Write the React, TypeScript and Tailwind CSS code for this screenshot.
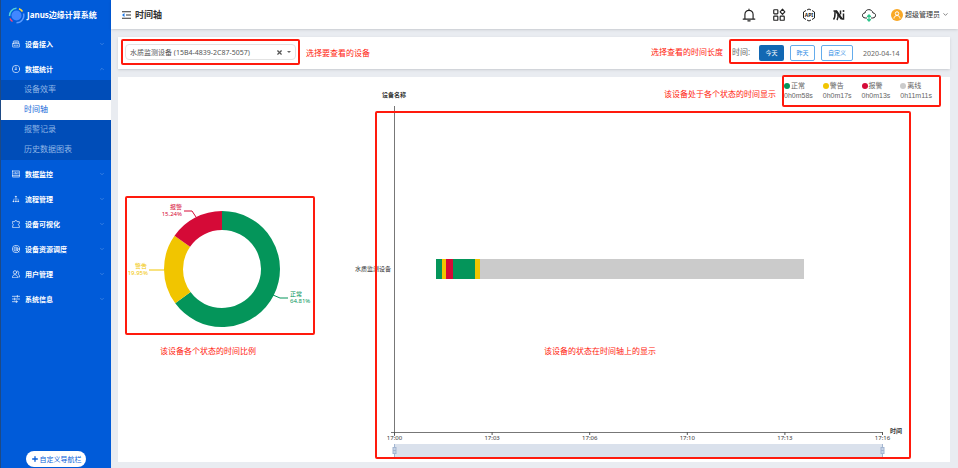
import type { ReactNode } from 'react';
import { ChevronDown, ChevronUp, Plus, X } from 'lucide-react';

const GREEN = '#04955a';
const YELLOW = '#f1c500';
const RED = '#d50a37';
const GRAY = '#cbcbcb';

const chartFont = '"Noto Sans", "Noto Sans CJK SC", sans-serif';

function Icon({ size = 'size-2', children }: { size?: string; children: ReactNode }) {
  return (
    <svg
      viewBox="0 0 24 24"
      className={`${size} shrink-0`}
      fill="none"
      stroke="currentColor"
      strokeWidth="2"
      strokeLinecap="round"
      strokeLinejoin="round"
      aria-hidden="true"
    >
      {children}
    </svg>
  );
}

const topMenus = [
  {
    name: '设备接入',
    open: false,
    icon: (
      <>
        <path d="M4 10V5a2 2 0 0 1 2-2h12a2 2 0 0 1 2 2v5" />
        <rect x="1" y="11" width="22" height="10" rx="2" />
        <path d="M8 7h8M6 16h4M14 16h4" />
      </>
    ),
  },
  {
    name: '数据统计',
    open: true,
    icon: (
      <>
        <circle cx="12" cy="12" r="11" />
        <path d="M12 6v7M9 13h4" />
      </>
    ),
  },
];

const subMenus = [
  { name: '设备效率', active: false },
  { name: '时间轴', active: true },
  { name: '报警记录', active: false },
  { name: '历史数据图表', active: false },
];

const bottomMenus = [
  {
    name: '数据监控',
    open: false,
    icon: (
      <>
        <rect x="1" y="3" width="22" height="18" rx="1" />
        <path d="M1 17h22M6 12V9M10 12V7M14 12V9M18 12V7" />
      </>
    ),
  },
  {
    name: '流程管理',
    open: false,
    icon: (
      <>
        <path d="M12 7v5M5 17v-5h14v5M12 12v5" strokeWidth="1" />
        <path d="M11 4h2v2h-2zM4 18h2v2H4zM11 18h2v2h-2zM18 18h2v2h-2z" fill="currentColor" />
      </>
    ),
  },
  {
    name: '设备可视化',
    open: false,
    icon: <path d="M2 5h6c0-5 7-5 7 0h7v6c-4 0-4 6 0 6v6H2v-6c3 0 3-5 0-6z" />,
  },
  {
    name: '设备资源调度',
    open: false,
    icon: (
      <>
        <circle cx="12" cy="12" r="11" />
        <circle cx="12" cy="12" r="6" />
        <circle cx="12" cy="12" r="1" />
        <path d="M16 16l5 5" />
      </>
    ),
  },
  {
    name: '用户管理',
    open: false,
    icon: (
      <>
        <circle cx="9" cy="7" r="5" />
        <path d="M1 22c0-11 16-11 16 0zM16 3c5 0 6 6 2 9 3 1 5 5 5 9h-3" />
      </>
    ),
  },
  {
    name: '系统信息',
    open: false,
    icon: <path d="M1 4h22M16 1v6M1 12h22M8 9v6M1 20h16M13 17v6" />,
  },
];

type Menu = { name: string; open: boolean; icon: ReactNode };

function MenuItem({ item }: { item: Menu }) {
  return (
    <button
      className={`flex h-6 w-full items-center pl-[11px] pr-1.5 text-[7px] font-bold text-white ${item.open ? 'pt-0.5' : ''}`}
    >
      <Icon>{item.icon}</Icon>
      <span className="ml-[5px] flex-1 text-left">{item.name}</span>
      {item.open ? (
        <ChevronUp size={6} className="text-white/40" />
      ) : (
        <ChevronDown size={6} className="text-white/40" />
      )}
    </button>
  );
}

function Logo() {
  return (
    <svg viewBox="0 0 34 34" className="size-[17px] shrink-0" fill="none" aria-hidden="true">
      <circle cx="17" cy="17" r="10" fill="#4187ff" />
      <g strokeWidth="3">
        <path d="M3 18A14.500 14.500 0 0 1 17 2.500" stroke="#4fd0dc" />
        <path d="M22 3.500A14.500 14.500 0 0 1 29 9" stroke="#ffd93b" />
        <path d="M31 13A14.500 14.500 0 0 1 17 31.500" stroke="#5a9bff" />
        <path d="M9 29A14.500 14.500 0 0 1 4 23" stroke="#ff4570" />
      </g>
    </svg>
  );
}

function Sidebar() {
  return (
    <aside className="flex w-[111px] shrink-0 flex-col border-l border-[#1e4a85] bg-[#005bd9]">
      <div className="flex h-8 items-center gap-0.5 pb-0.5 pl-[7px] text-[8px] font-bold text-white">
        <Logo />
        <span className="whitespace-nowrap">Janus边缘计算系统</span>
      </div>
      <nav>
        {topMenus.map((item) => (
          <MenuItem key={item.name} item={item} />
        ))}
        <div className="bg-[#004db8]">
          {subMenus.map((item) => (
            <a
              key={item.name}
              href="#"
              className={`flex h-5 items-center pb-0.5 pl-[23px] text-[8px] ${
                item.active ? 'bg-white text-[#1467d8]' : 'text-[#8fb5e6]'
              }`}
            >
              {item.name}
            </a>
          ))}
        </div>
        <div className="flex flex-col gap-px pt-0.5">
          {bottomMenus.map((item) => (
            <MenuItem key={item.name} item={item} />
          ))}
        </div>
      </nav>
      <button className="mx-auto mt-auto mb-px flex h-4 w-[60px] items-center justify-center gap-px rounded-full bg-white text-[7px] whitespace-nowrap text-[#0a5fd8]">
        <Plus size={8} strokeWidth={4} />
        自定义导航栏
      </button>
    </aside>
  );
}

function Header() {
  return (
    <header className="flex h-[29px] items-center bg-white pl-[11px] pr-[9px] text-[#222] shadow-sm">
      <svg viewBox="0 0 18 16" className="h-2 w-[9px]" fill="none" aria-hidden="true">
        <path d="M0 1.500h18M8 8h10M0 14.500h18" stroke="#333" strokeWidth="2" />
        <path d="M0 8l5-4v8z" fill="#1976e8" />
      </svg>
      <h1 className="ml-1 text-[9px] font-bold text-[#333]">时间轴</h1>
      <div className="ml-auto flex items-center gap-4">
        <button aria-label="通知">
          <Icon size="size-3.5">
            <path d="M2 19h20M5 19v-8a7 7 0 0 1 14 0v8M10 22h4M12 4V2" />
          </Icon>
        </button>
        <button aria-label="应用">
          <Icon size="size-3.5">
            <rect x="3" y="3" width="7" height="7" rx="1" />
            <path d="M18 2l4 4.500-4 4.500-4-4.500z" />
            <rect x="3" y="14" width="7" height="7" rx="1" />
            <rect x="14" y="14" width="7" height="7" rx="1" />
          </Icon>
        </button>
        <button aria-label="API">
          <svg viewBox="0 0 28 28" className="size-3.5" fill="none" stroke="currentColor" strokeWidth="2" aria-hidden="true">
            <path d="M8 5L3 8v12l5 3M20 23l5-3V8l-5-3M10 4l4-2 4 2M10 24l4 2 4-2" />
            <text x="14" y="18" textAnchor="middle" fontSize="10" fontWeight="700" fill="currentColor" stroke="none" fontFamily={chartFont}>
              API
            </text>
          </svg>
        </button>
        <button aria-label="节点">
          <svg viewBox="0 0 28 28" className="size-3.5" fill="none" stroke="currentColor" strokeWidth="3" aria-hidden="true">
            <path d="M3 6h6l11 16h3V11M6 7v4c0 5 0 9-3 12M12 13c1 5 0 8-2 11M17 5v8" />
            <path d="M8 6l11 16" strokeWidth="4" />
            <circle cx="23" cy="6" r="2" fill="currentColor" stroke="none" />
          </svg>
        </button>
        <button aria-label="云端上传">
          <svg viewBox="0 0 28 28" className="size-3.5" fill="none" strokeWidth="2" strokeLinecap="round" aria-hidden="true">
            <path d="M9 20H7C-1 20-1 10 6 10 7 1 20 1 22 10c7 0 7 10-1 10h-2" stroke="#222" />
            <path d="M14 25V15M11 17l3-3 3 3M11 23l3 3 3-3" stroke="#2bc48a" strokeWidth="2.500" />
          </svg>
        </button>
      </div>
      <button className="ml-[15px] flex items-center text-[7px] text-[#333]">
        <svg viewBox="0 0 24 24" className="size-3" fill="none" stroke="#fff" strokeWidth="2" aria-hidden="true">
          <circle cx="12" cy="12" r="12" fill="#f9a825" stroke="none" />
          <circle cx="12" cy="9" r="3.500" />
          <path d="M6 19c0-8 12-8 12 0" />
        </svg>
        <span className="ml-0.5">超级管理员</span>
        <ChevronDown size={7} className="ml-0.5" />
      </button>
    </header>
  );
}

function FilterBar() {
  return (
    <section className="flex h-8 items-start bg-white pl-[3px] pr-[41px] pt-0.5 shadow-sm">
      <div className="flex h-[26px] w-[179px] items-center rounded-xs border-2 border-[#ff1a0d] px-0.5">
        <div className="flex h-4 w-full items-center rounded-sm border border-[#e3e3e3] pr-1 text-[#555]">
          <select aria-label="设备" className="min-w-0 flex-1 appearance-none bg-transparent pl-1 text-[7px] outline-none">
            <option>水质监测设备 (15B4-4839-2C87-5057)</option>
          </select>
          <button aria-label="清除">
            <X size={7} strokeWidth={4} />
          </button>
          <span className="ml-1 border-x-2 border-t-2 border-x-transparent border-t-[#666]" />
        </div>
      </div>
      <span className="ml-1.5 self-center pb-0.5 text-[8px] text-[#ff1a0d]">选择要查看的设备</span>
      <span className="ml-auto self-center pb-1 text-[8px] text-[#ff1a0d]">选择查看的时间长度</span>
      <div className="ml-1.5 flex h-[25px] w-[180px] items-center rounded-xs border-2 border-[#ff1a0d] pl-px text-[6px] whitespace-nowrap">
        <span className="w-[27px] text-[8px] text-[#666]">时间:</span>
        <div className="flex gap-1.5 pt-0.5">
          <button className="h-4 w-[25px] rounded-xs bg-[#1268b3] text-white">今天</button>
          <button className="h-4 w-[25px] rounded-xs border border-[#64acec] text-[#2d8ce6]">昨天</button>
          <button className="h-4 w-8 rounded-xs border border-[#64acec] text-[#2d8ce6]">自定义</button>
        </div>
        <time dateTime="2020-04-14" className="ml-2.5 pt-1 text-[7px] text-[#666]">
          2020-04-14
        </time>
      </div>
    </section>
  );
}

const durations = [
  { name: '正常', time: '0h0m58s', dot: 'bg-[#04955a]' },
  { name: '警告', time: '0h0m17s', dot: 'bg-[#f1c500]' },
  { name: '报警', time: '0h0m13s', dot: 'bg-[#d50a37]' },
  { name: '离线', time: '0h11m11s', dot: 'bg-[#cbcbcb]' },
];

function StatusDurations() {
  return (
    <div className="absolute -top-0.5 right-[9px] flex items-center gap-1.5">
      <span className="pt-1.5 text-[8px] text-[#ff1a0d]">该设备处于各个状态的时间显示</span>
      <ul className="flex h-8 w-[159px] items-center rounded-xs border-2 border-[#ff1a0d] font-['Liberation_Sans','Noto_Sans_CJK_SC',sans-serif] text-[#666]">
        {durations.map((d) => (
          <li key={d.name} className="w-[39px] text-[7px] leading-[10px]">
            <div className="flex items-center gap-px">
              <span className={`size-1.5 rounded-full ${d.dot}`} />
              {d.name}
            </div>
            {d.time}
          </li>
        ))}
      </ul>
    </div>
  );
}

function StatusPie() {
  return (
    <svg viewBox="0 0 186 135" className="w-full" fontFamily={chartFont} fontSize="6">
      <g fill="none" strokeWidth="19">
        <path d="M95 22.500A48.500 48.500 0 1 1 55.900 99.700" stroke={GREEN} />
        <path d="M55.900 99.700A48.500 48.500 0 0 1 55.300 43.200" stroke={YELLOW} />
        <path d="M55.300 43.200A48.500 48.500 0 0 1 95 22.500" stroke={RED} />
      </g>
      <g fill="none">
        <path d="M146 97l7 3h8" stroke={GREEN} />
        <path d="M37 72H22" stroke={YELLOW} />
        <path d="M69 19l-4-6h-8" stroke={RED} />
      </g>
      <g fill={GREEN}>
        <text x="163" y="98">正常</text>
        <text x="163" y="105">64.81%</text>
      </g>
      <g fill={YELLOW} textAnchor="end">
        <text x="20" y="70">警告</text>
        <text x="21" y="77">19.95%</text>
      </g>
      <g fill={RED} textAnchor="end">
        <text x="55" y="11">报警</text>
        <text x="55" y="18">15.24%</text>
      </g>
    </svg>
  );
}

const ticks = ['17:00', '17:03', '17:06', '17:10', '17:13', '17:16'];

const segments = [
  { x: 96, width: 6, color: GREEN },
  { x: 102, width: 4, color: YELLOW },
  { x: 106, width: 7, color: RED },
  { x: 113, width: 22, color: GREEN },
  { x: 135, width: 5, color: YELLOW },
  { x: 140, width: 324, color: GRAY },
];

function Timeline() {
  return (
    <svg viewBox="0 0 610 384" className="w-full" fontFamily={chartFont} fontSize="6" fill="#333">
      <text x="54" y="20" textAnchor="middle" fontWeight="700">设备名称</text>
      <text x="51" y="194" textAnchor="end">水质监测设备</text>
      <path d="M54.500 29v330M51 355.500h492" fill="none" stroke="#777" />
      {ticks.map((label, i) => (
        <g key={label}>
          <path d={`M${54.5 + i * 97.6} 355v3`} stroke="#555" />
          <text x={54.5 + i * 97.6} y="363" textAnchor="middle">
            {label}
          </text>
        </g>
      ))}
      <text x="550" y="356" fontWeight="700">时间</text>
      {segments.map((s) => (
        <rect key={s.x} x={s.x} y="182" width={s.width} height="20" fill={s.color} />
      ))}
      {/* 缩放条 */}
      <rect x="54" y="367" width="489" height="14" fill="#dae1ec" />
      {[54.5, 542.5].map((x) => (
        <g key={x} stroke="#a3b6d1">
          <path d={`M${x} 367v14`} />
          <rect x={x - 1.5} y="370.500" width="3" height="6" fill="#c8d5e8" />
          <path d={`M${x - 1.5} 373.500h3`} />
        </g>
      ))}
      <rect x="36" y="35" width="534" height="346" fill="none" stroke="#ff1a0d" strokeWidth="2" rx="1" />
      <text x="204" y="277" fontSize="8" fill="#ff1a0d">该设备的状态在时间轴上的显示</text>
    </svg>
  );
}

export default function App() {
  return (
    <div className="flex min-h-screen bg-[#e9ecf1] font-['Noto_Sans','Noto_Sans_CJK_SC',sans-serif] leading-none">
      <Sidebar />
      <div className="flex min-w-0 flex-1 flex-col">
        <Header />
        <main className="flex flex-1 flex-col gap-2 pt-2 pr-2 pb-1.5 pl-[7px]">
          <FilterBar />
          <section className="relative flex flex-1 bg-white">
            <div className="flex w-[222px] shrink-0 flex-col justify-center pt-3 pl-[7px]">
              <div className="w-[190px] rounded-xs border-2 border-[#ff1a0d]">
                <StatusPie />
              </div>
              <p className="pt-3 pl-[35px] text-[8px] text-[#ff1a0d]">该设备各个状态的时间比例</p>
            </div>
            <div className="min-w-0 flex-1">
              <Timeline />
            </div>
            <StatusDurations />
          </section>
        </main>
      </div>
    </div>
  );
}
